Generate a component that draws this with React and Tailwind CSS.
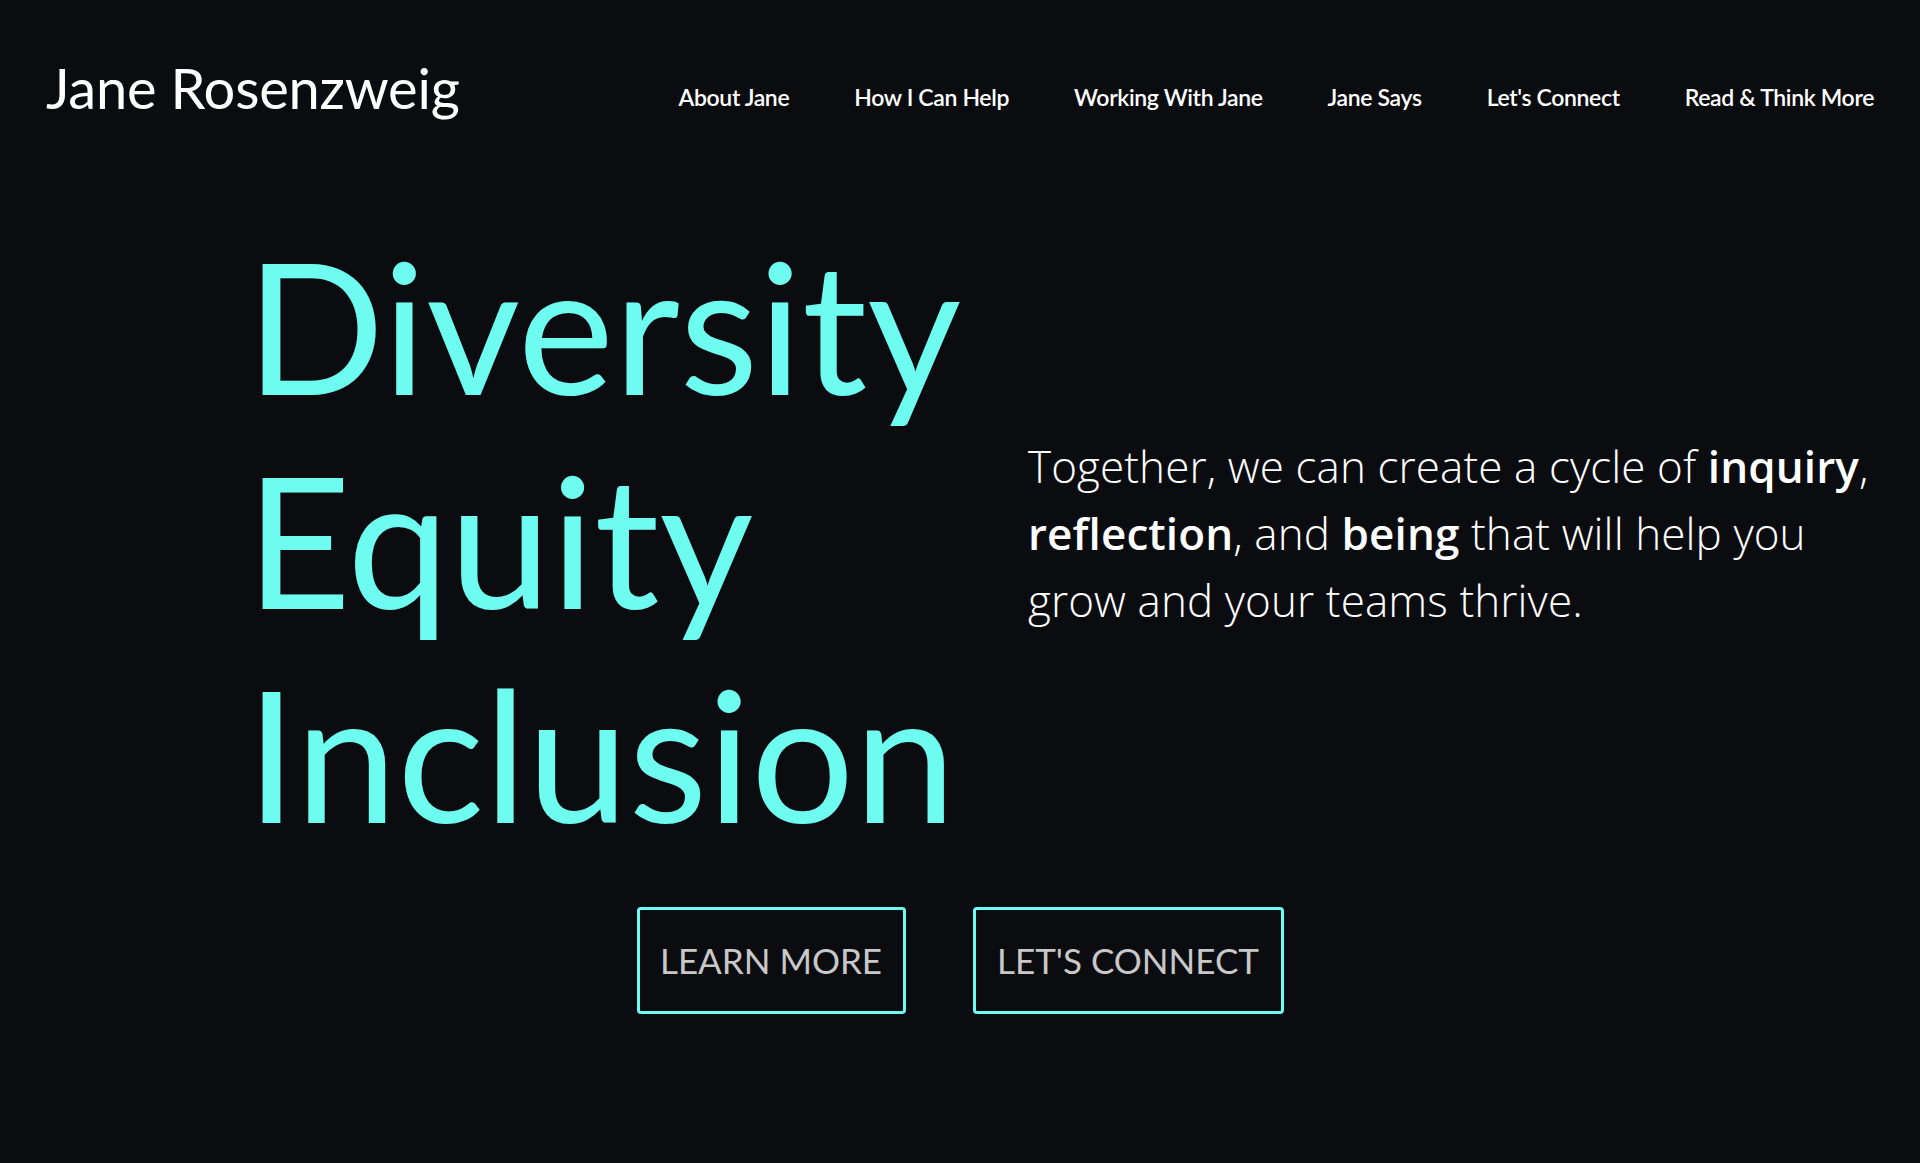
const NAV = ['About Jane', 'How I Can Help', 'Working With Jane', 'Jane Says', "Let's Connect", 'Read & Think More'];

function Header() {
    return (
        <header className="flex items-start justify-between px-[46px] pt-[60px]">
            <a href="#" className="text-[56px] leading-none text-white font-['Lato',sans-serif] tracking-[-0.2px]">
                Jane Rosenzweig
            </a>
            <nav className="flex items-start gap-[65px] mt-[26px]">
                {NAV.map(item => (
                    <a key={item} href="#" className="text-[23px] leading-none font-semibold text-white font-['Lato',sans-serif] tracking-[-0.35px]">
                        {item}
                    </a>
                ))}
            </nav>
        </header>
    );
}

function Hero() {
    return (
        <section className="mt-[102px]">
            <div className="flex items-start pl-[246px] pr-[46px]">
                <h1 className="w-[782px] shrink-0 text-[182px] leading-[214px] text-[#6ffcf0] font-['Lato',sans-serif] font-normal">
                    Diversity<br />Equity<br />Inclusion
                </h1>
                <p className="mt-[215px] text-[44px] leading-[67px] font-light text-white font-['Open_Sans',sans-serif] tracking-[0.1px]">
                    Together, we can create a cycle of <strong className="font-semibold">inquiry</strong>,{' '}
                    <strong className="font-semibold">reflection</strong>, and <strong className="font-semibold">being</strong> that will help you grow and your teams thrive.
                </p>
            </div>
            <div className="flex justify-center gap-[67px] mt-[47px]">
                <a href="#" className="flex items-center justify-center w-[269px] h-[107px] border-[3px] border-[#6ffcf0] rounded-[4px] text-[35px] uppercase text-[#c8c8c8] font-['Lato',sans-serif]">
                    Learn More
                </a>
                <a href="#" className="flex items-center justify-center w-[311px] h-[107px] border-[3px] border-[#6ffcf0] rounded-[4px] text-[35px] uppercase text-[#c8c8c8] font-['Lato',sans-serif]">
                    Let's Connect
                </a>
            </div>
        </section>
    );
}

export default function App() {
    return (
        <div className="min-h-[1163px] bg-[#0b0c10]">
            <Header />
            <Hero />
        </div>
    );
}
